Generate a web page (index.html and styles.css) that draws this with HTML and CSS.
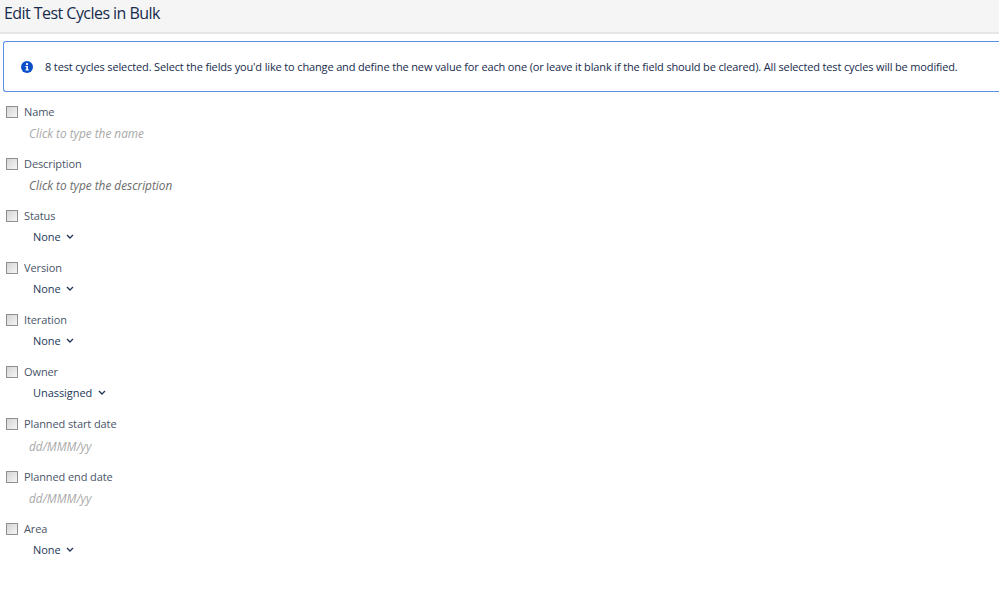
FILE: index.html
```html
<!DOCTYPE html>
<html lang="en">

<head>
  <meta charset="UTF-8" />
  <title>Edit Test Cycles in Bulk</title>
  <link rel="stylesheet" href="styles.css">
</head>

<body>
  <div class="header">
    <h1>Edit Test Cycles in Bulk</h1>
  </div>

  <div class="notice">
    <svg class="info-icon" viewBox="0 0 12 12" width="12" height="12">
      <circle cx="6" cy="6" r="6" fill="#0b50c8" />
      <rect x="5" y="2.2" width="2" height="1.8" fill="#fff" />
      <path d="M4.4 5h2.6v3.6h.8v1H4.4v-1h.9V6h-.9z" fill="#fff" />
    </svg>
    <span>8 test cycles selected. Select the fields you'd like to change and define the new value for each one (or leave it blank if the field should be cleared). All selected test cycles will be modified.</span>
  </div>

  <div class="fields">
    <div class="field">
      <label class="field-label"><span class="check"></span>Name</label>
      <div class="placeholder">Click to type the name</div>
    </div>
    <div class="field">
      <label class="field-label"><span class="check"></span>Description</label>
      <div class="placeholder dark">Click to type the description</div>
    </div>
    <div class="field">
      <label class="field-label"><span class="check"></span>Status</label>
      <div class="select">None <svg class="chevron" viewBox="0 0 8 6" width="8" height="6"><path d="M1 1l3 3 3-3" /></svg></div>
    </div>
    <div class="field">
      <label class="field-label"><span class="check"></span>Version</label>
      <div class="select">None <svg class="chevron" viewBox="0 0 8 6" width="8" height="6"><path d="M1 1l3 3 3-3" /></svg></div>
    </div>
    <div class="field">
      <label class="field-label"><span class="check"></span>Iteration</label>
      <div class="select">None <svg class="chevron" viewBox="0 0 8 6" width="8" height="6"><path d="M1 1l3 3 3-3" /></svg></div>
    </div>
    <div class="field">
      <label class="field-label"><span class="check"></span>Owner</label>
      <div class="select">Unassigned <svg class="chevron" viewBox="0 0 8 6" width="8" height="6"><path d="M1 1l3 3 3-3" /></svg></div>
    </div>
    <div class="field">
      <label class="field-label"><span class="check"></span>Planned start date</label>
      <div class="placeholder">dd/MMM/yy</div>
    </div>
    <div class="field">
      <label class="field-label"><span class="check"></span>Planned end date</label>
      <div class="placeholder">dd/MMM/yy</div>
    </div>
    <div class="field">
      <label class="field-label"><span class="check"></span>Area</label>
      <div class="select">None <svg class="chevron" viewBox="0 0 8 6" width="8" height="6"><path d="M1 1l3 3 3-3" /></svg></div>
    </div>
  </div>
</body>

</html>
```

FILE: styles.css
```css
body {
  margin: 0;
  background: white;
  font-family: 'Open Sans', 'Noto Sans', sans-serif;
  font-size: 11px;
  color: #172b4d;
  overflow: hidden;
}

.header {
  height: 32px;
  padding-left: 4px;
  background: #f5f5f5;
  border-bottom: 2px solid #e6e6e6;
}

h1 {
  margin: 0;
  font-size: 16px;
  font-weight: 400;
  letter-spacing: -0.55px;
  line-height: 27px;
  color: #172b4d;
}

.notice {
  display: flex;
  align-items: center;
  gap: 12px;
  height: 49px;
  margin: 7px 0 0 3px;
  padding-left: 17px;
  border: 1px solid #5a90e6;
  border-right: 0;
  border-radius: 3px 0 0 3px;
  letter-spacing: -0.145px;
  white-space: nowrap;
}

.fields {
  padding-top: 11.4px;
}

.field {
  height: 52.1px;
}

.field-label {
  display: flex;
  align-items: center;
  height: 16px;
  padding-left: 6px;
  letter-spacing: -0.1px;
  color: #4a5568;
}

.check {
  width: 10px;
  height: 10px;
  margin: 1px 6px 0 0;
  border: 1px solid #8f8f8f;
  background: linear-gradient(135deg, #d4d4d4, #f6f6f6);
}

.placeholder {
  margin-top: 5.6px;
  padding-left: 29px;
  font-size: 11.8px;
  font-style: italic;
  line-height: 16px;
  color: #a8a8a8;
}

.placeholder.dark {
  color: #6b6b6b;
}

.select {
  margin-top: 5.6px;
  padding-left: 33px;
  letter-spacing: -0.05px;
  line-height: 16px;
  color: #253858;
}

.chevron {
  margin-left: 3px;
  vertical-align: 1px;
}

.chevron path {
  fill: none;
  stroke: #253858;
  stroke-width: 1.4;
}
```
